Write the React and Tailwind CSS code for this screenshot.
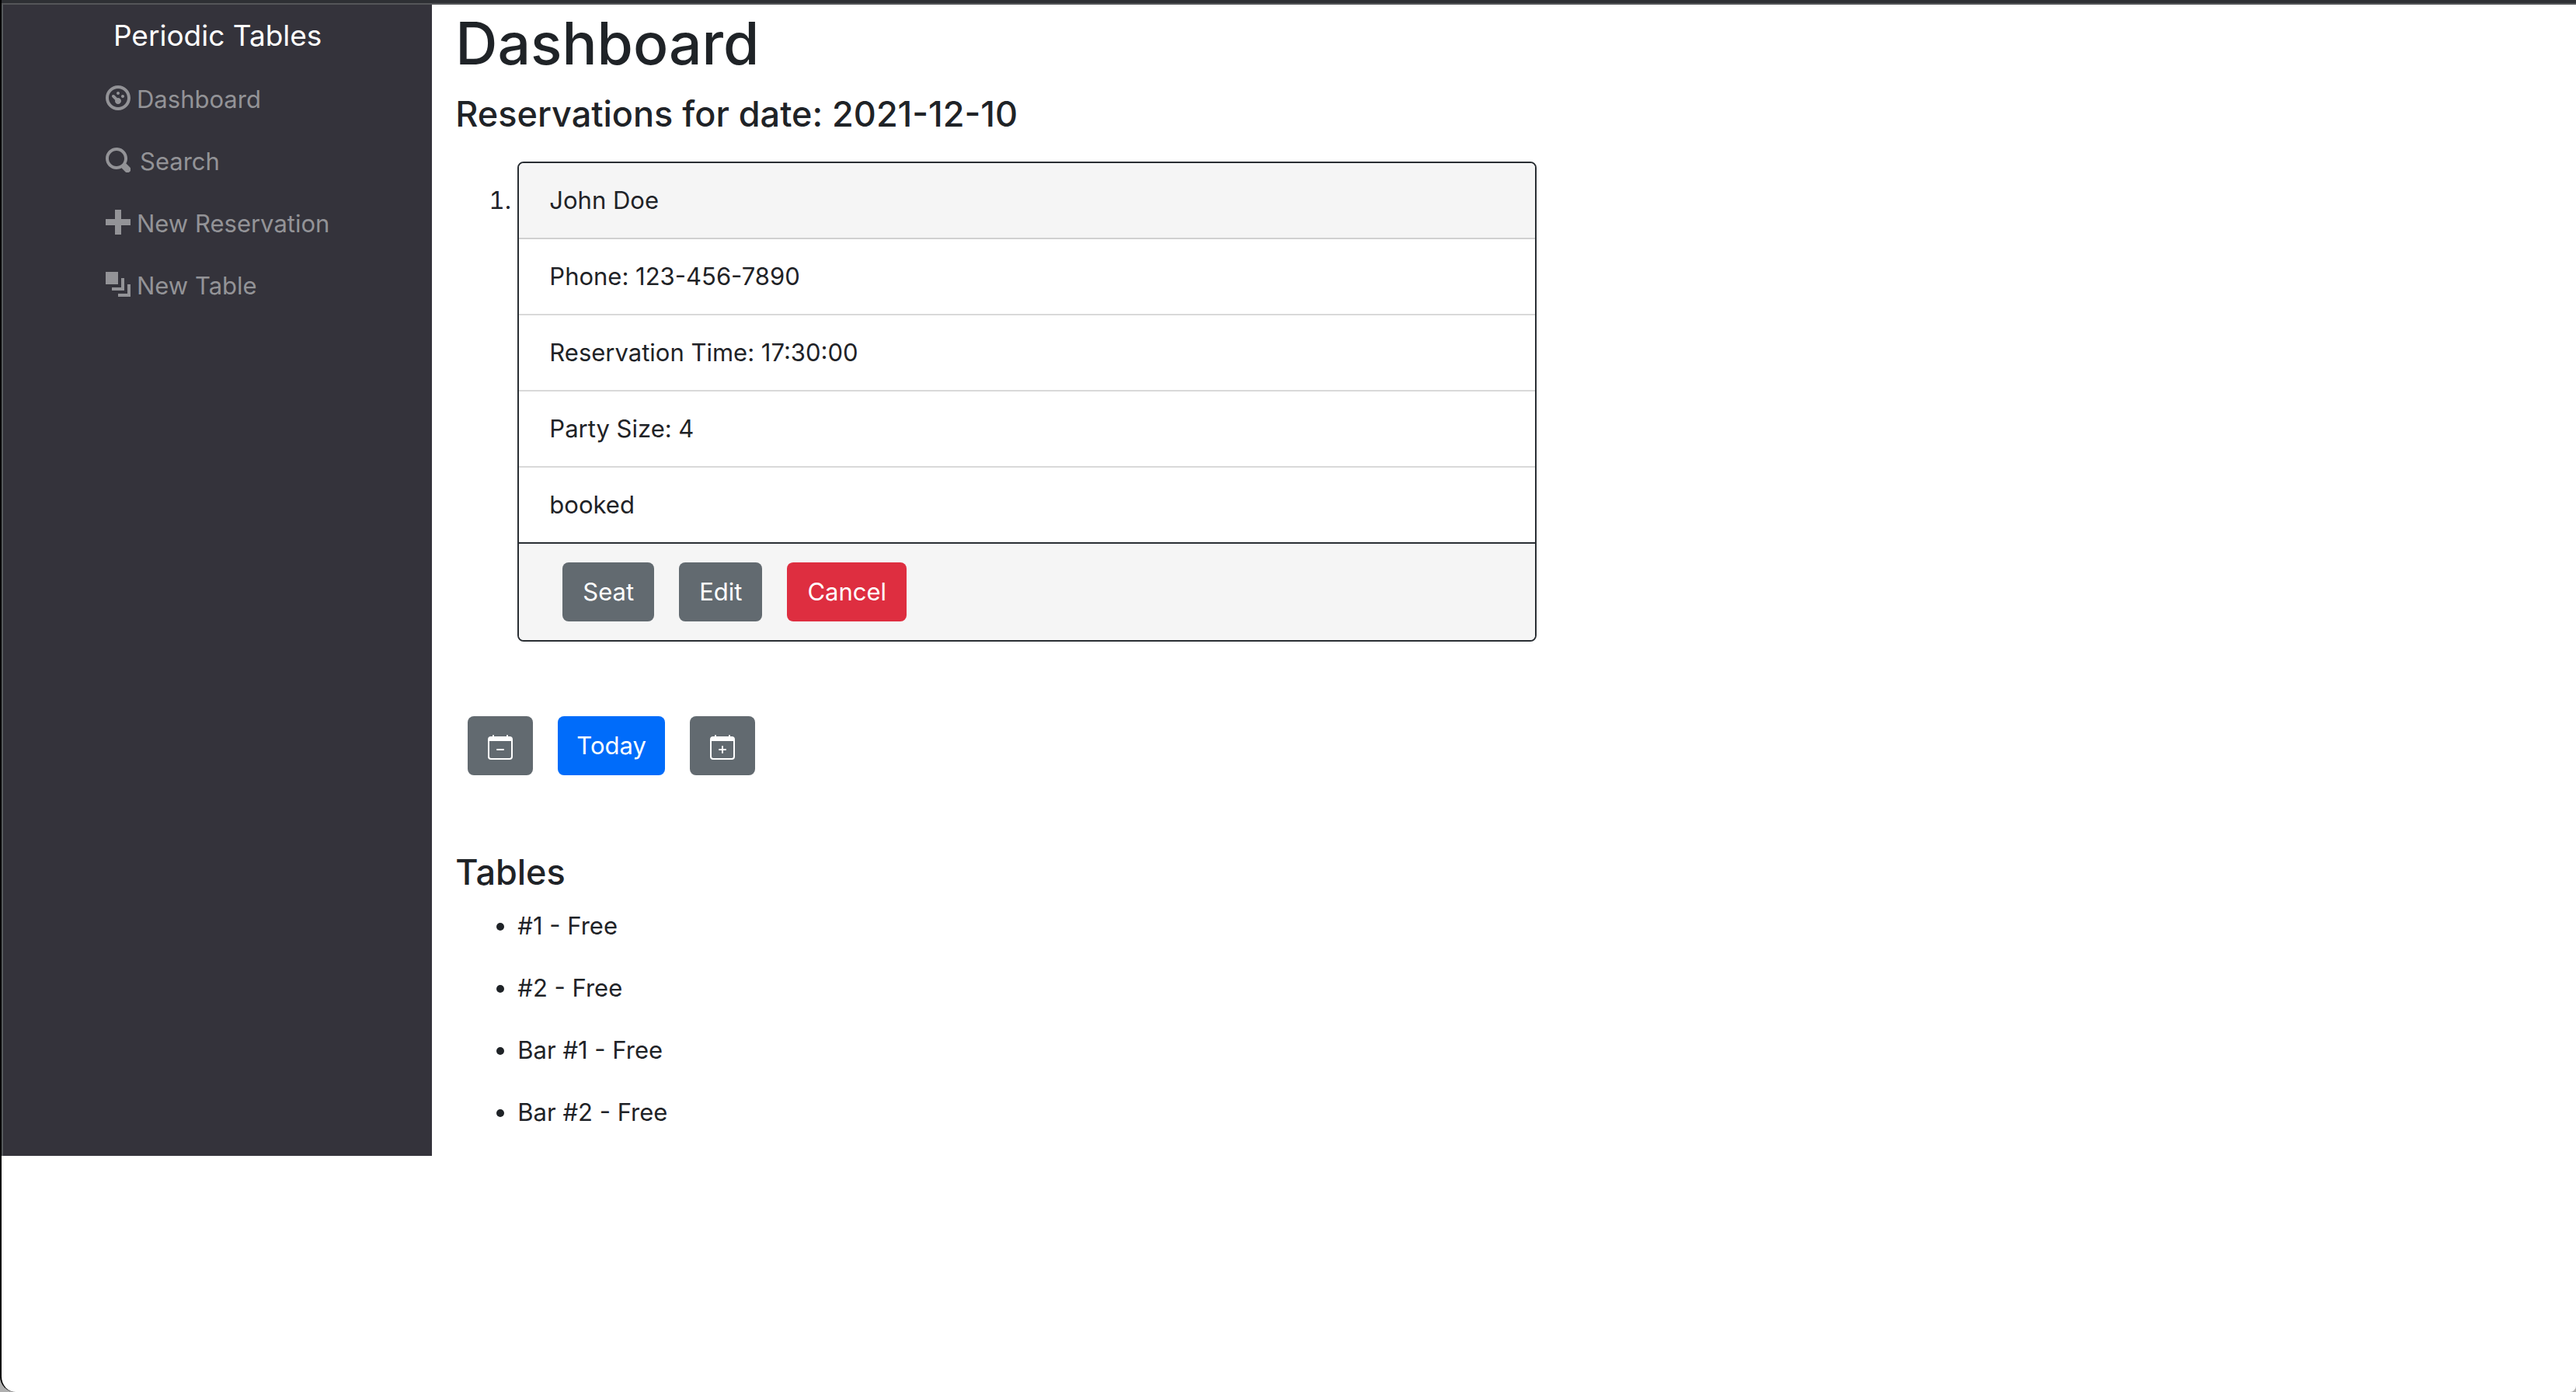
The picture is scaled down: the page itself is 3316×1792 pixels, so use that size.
const navItems = [
  { label: "Dashboard", icon: "dashboard", gap: "gap-2" },
  { label: "Search", icon: "search", gap: "gap-3" },
  { label: "New Reservation", icon: "plus", gap: "gap-2" },
  { label: "New Table", icon: "layers", gap: "gap-2" },
];

const iconPaths = {
  dashboard:
    "M4 0c-2.2 0-4 1.8-4 4s1.8 4 4 4 4-1.8 4-4-1.8-4-4-4zm0 1c1.66 0 3 1.34 3 3s-1.34 3-3 3-3-1.34-3-3 1.34-3 3-3zm0 1c-.28 0-.5.22-.5.5s.22.5.5.5.5-.22.5-.5-.22-.5-.5-.5zm-1.66 1a.5.5 0 0 0-.19.84l.91.91c-.02.08-.06.16-.06.25 0 .55.45 1 1 1s1-.45 1-1-.45-1-1-1c-.09 0-.17.04-.25.06l-.91-.91a.5.5 0 0 0-.44-.16.5.5 0 0 0-.06 0zm3.16 0c-.28 0-.5.22-.5.5s.22.5.5.5.5-.22.5-.5-.22-.5-.5-.5z",
  search:
    "M3.5 0c-1.93 0-3.5 1.57-3.5 3.5s1.57 3.5 3.5 3.5c.59 0 1.17-.14 1.66-.41a1 1 0 0 0 .13.13l1 1a1.02 1.02 0 1 0 1.44-1.44l-1-1a1 1 0 0 0-.16-.13c.27-.49.44-1.06.44-1.66 0-1.93-1.55-3.5-3.5-3.5zm0 1c1.39 0 2.5 1.11 2.5 2.5 0 .66-.24 1.27-.66 1.72-.01.01-.02.02-.03.03a1 1 0 0 0-.13.13c-.44.4-1.04.63-1.69.63-1.39 0-2.5-1.11-2.5-2.5s1.11-2.5 2.5-2.5z",
  plus: "M3 0v3h-3v2h3v3h2v-3h3v-2h-3v-3h-2z",
  layers: "M0 0v4h4v-4h-4zm5 2v3h-3v1h4v-4h-1zm2 2v3h-3v1h4v-4h-1z",
};

function NavIcon({ name }) {
  return (
    <svg viewBox="0 0 8 8" className="mt-1.5 size-8 shrink-0" fill="currentColor" aria-hidden="true">
      <path d={iconPaths[name]} />
    </svg>
  );
}

function CalendarIcon({ plus }) {
  return (
    <svg viewBox="0 0 16 16" className="mt-1 size-8" fill="currentColor" aria-hidden="true">
      <path d={plus ? "M8 7a.5.5 0 0 1 .5.5V9H10a.5.5 0 0 1 0 1H8.500v1.500a.5.5 0 0 1-1 0V10H6a.5.5 0 0 1 0-1h1.500V7.500A.5.5 0 0 1 8 7z" : "M5.500 9.500A.5.5 0 0 1 6 9h4a.5.5 0 0 1 0 1H6a.5.5 0 0 1-.5-.5z"} />
      <path d="M3.500 0a.5.5 0 0 1 .5.5V1h8V.5a.5.5 0 0 1 1 0V1h1a2 2 0 0 1 2 2v11a2 2 0 0 1-2 2H2a2 2 0 0 1-2-2V3a2 2 0 0 1 2-2h1V.5a.5.5 0 0 1 .5-.5zM1 4v10a1 1 0 0 0 1 1h12a1 1 0 0 0 1-1V4H1z" />
    </svg>
  );
}

const details = ["Phone: 123-456-7890", "Reservation Time: 17:30:00", "Party Size: 4"];
const tables = ["#1 - Free", "#2 - Free", "Bar #1 - Free", "Bar #2 - Free"];

function Button({ className, children, ...rest }) {
  return (
    <button
      type="button"
      className={"flex h-[76px] items-center justify-center rounded-lg text-white " + className}
      {...rest}
    >
      {children}
    </button>
  );
}

export default function App() {
  return (
    <div className="min-h-screen bg-[#b0b0b0] font-['Inter',sans-serif] text-[31px] leading-[48px] text-[#1f2327]">
      <div className="flex min-h-screen flex-col rounded-br-lg rounded-bl-[20px] border-l-2 border-black bg-white">
        <div className="h-1.5 border-b-2 border-[#555659] bg-[#2e3034]" />
        <div className="flex">
          <aside className="w-[calc(100%/6+2px)] border-l-2 border-[#55595c] bg-[#34333b] pt-2.5">
            <a href="#home" className="block text-center text-[37px] leading-[60px] text-white">
              Periodic Tables
            </a>
            <nav className="mt-3 pl-[132px] text-[#939397]">
              {navItems.map((item) => (
                <a key={item.label} href="#nav" className={"flex items-start py-4 whitespace-nowrap " + item.gap}>
                  <NavIcon name={item.icon} />
                  {item.label}
                </a>
              ))}
            </nav>
          </aside>
          <main className="flex-1 pt-0.5 pr-[26px] pl-[30px]">
            <h1 className="mb-3.5 text-[75px] leading-[96px] font-medium">Dashboard</h1>
            <h2 className="mb-8 text-[45px] leading-[58px] font-medium">Reservations for date: 2021-12-10</h2>
            <ol className="list-decimal pl-20">
              <li>
                <article className="w-1/2 rounded-lg border-2 border-[#292e33]">
                  <header className="rounded-t-md border-b-2 border-[#d0d0d0] bg-[#f5f5f5] px-[39px] py-6">John Doe</header>
                  {details.map((text) => (
                    <p key={text} className="border-b-2 border-[#d9d9d9] px-[39px] py-6">
                      {text}
                    </p>
                  ))}
                  <p className="border-b-2 border-[#292e33] px-[39px] py-6">booked</p>
                  <footer className="flex gap-8 rounded-b-md bg-[#f5f5f5] px-14 py-6">
                    <Button className="bg-[#626a70] px-[26px]">Seat</Button>
                    <Button className="bg-[#626a70] px-[26px]">Edit</Button>
                    <Button className="bg-[#de2e40] px-[26px]">Cancel</Button>
                  </footer>
                </article>
              </li>
            </ol>
            <div className="my-24 flex gap-8 pl-4">
              <Button className="w-[84px] bg-[#626a70]" aria-label="Previous day">
                <CalendarIcon />
              </Button>
              <Button className="bg-[#006cfa] px-6">Today</Button>
              <Button className="w-[84px] bg-[#626a70]" aria-label="Next day">
                <CalendarIcon plus />
              </Button>
            </div>
            <h2 className="mb-4 text-[45px] leading-[58px] font-medium">Tables</h2>
            <ul className="list-disc pl-20">
              {tables.map((table) => (
                <li key={table} className="mb-8">
                  {table}
                </li>
              ))}
            </ul>
          </main>
        </div>
      </div>
    </div>
  );
}
